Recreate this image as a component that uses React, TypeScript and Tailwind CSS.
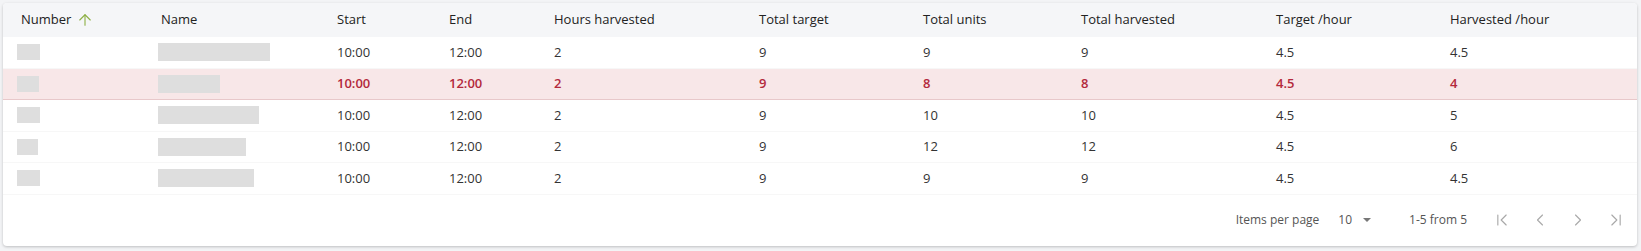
import { ArrowUp, ChevronFirst, ChevronLast, ChevronLeft, ChevronRight } from 'lucide-react';

type Row = {
  numW: number;
  nameW: number;
  start: string;
  end: string;
  hours: string;
  target: string;
  units: string;
  harvested: string;
  targetHour: string;
  harvestedHour: string;
  alert?: boolean;
};

const rows: Row[] = [
  { numW: 23, nameW: 112, start: '10:00', end: '12:00', hours: '2', target: '9', units: '9', harvested: '9', targetHour: '4.5', harvestedHour: '4.5' },
  { numW: 22, nameW: 62, start: '10:00', end: '12:00', hours: '2', target: '9', units: '8', harvested: '8', targetHour: '4.5', harvestedHour: '4', alert: true },
  { numW: 23, nameW: 101, start: '10:00', end: '12:00', hours: '2', target: '9', units: '10', harvested: '10', targetHour: '4.5', harvestedHour: '5' },
  { numW: 21, nameW: 88, start: '10:00', end: '12:00', hours: '2', target: '9', units: '12', harvested: '12', targetHour: '4.5', harvestedHour: '6' },
  { numW: 23, nameW: 96, start: '10:00', end: '12:00', hours: '2', target: '9', units: '9', harvested: '9', targetHour: '4.5', harvestedHour: '4.5' },
];

const headers = ['Name', 'Start', 'End', 'Hours harvested', 'Total target', 'Total units', 'Total harvested', 'Target /hour', 'Harvested /hour'];

const gridCols = 'grid grid-cols-[140px_176px_112px_105px_205px_164px_158px_195px_174px_1fr]';

const Placeholder = ({ w, h }: { w: number; h: number }) => (
  <div className="bg-[#dedede] blur-[0.4px]" style={{ width: w, height: h }} />
);

const App = () => {
  return (
    <div className="min-h-screen bg-[#f3f4f6] pt-[3px] font-['Open_Sans',sans-serif] text-[13px]">
      <div className="mx-[3px] w-[1634px] rounded-[4px] bg-white shadow-[0_1px_3px_rgba(0,0,0,0.22)] overflow-hidden">
        {/* header */}
        <div className={`${gridCols} h-[34px] items-center bg-[#f5f6f8] text-[#222]`}>
          <div className="flex items-center pl-[18px]">
            Number
            <ArrowUp size={18} strokeWidth={1.5} className="ml-[5px] text-[#8db046]" />
          </div>
          {headers.map(h => (
            <div key={h} className="pl-[18px]">{h}</div>
          ))}
        </div>

        {/* rows */}
        {rows.map((r, i) => {
          const cells = [r.start, r.end, r.hours, r.target, r.units, r.harvested, r.targetHour, r.harvestedHour];
          return (
            <div
              key={i}
              className={
                r.alert
                  ? `${gridCols} h-[31.5px] items-center bg-[#f8e7e8] border-b border-[#e8c8ca] text-[#b3293c] font-semibold`
                  : `${gridCols} h-[31.5px] items-center border-b border-[#f7f7f7] text-[#333]`
              }
            >
              <div className="pl-[14px]">
                <Placeholder w={r.numW} h={16} />
              </div>
              <div className="pl-[15px]">
                <Placeholder w={r.nameW} h={18} />
              </div>
              {cells.map((c, j) => (
                <div key={j} className="pl-[18px]">{c}</div>
              ))}
            </div>
          );
        })}

        {/* footer */}
        <div className="flex h-[51.5px] items-center justify-end pr-[2px] text-[12px] text-[#555]">
          <span>Items per page</span>
          <span className="ml-[19px]">10</span>
          <span className="ml-[11px] h-0 w-0 border-x-[4px] border-t-[4px] border-x-transparent border-t-[#777]" />
          <span className="ml-[38px]">1-5 from 5</span>
          <div className="ml-[16px] flex text-[#aaa]">
            <button className="flex w-[38px] justify-center"><ChevronFirst size={20} strokeWidth={1.4} /></button>
            <button className="flex w-[38px] justify-center"><ChevronLeft size={20} strokeWidth={1.4} /></button>
            <button className="flex w-[38px] justify-center"><ChevronRight size={20} strokeWidth={1.4} /></button>
            <button className="flex w-[38px] justify-center"><ChevronLast size={20} strokeWidth={1.4} /></button>
          </div>
        </div>
      </div>
    </div>
  );
};

export default App;
